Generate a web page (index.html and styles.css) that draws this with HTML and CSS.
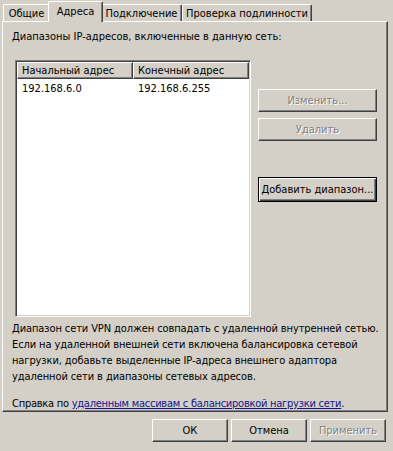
FILE: index.html
```html
<!DOCTYPE html>
<html lang="ru">
<head>
<meta charset="utf-8">
<link rel="stylesheet" href="styles.css">
</head>
<body>
<div class="dialog">
  <div class="tabs">
    <div class="tab t1">Общие</div>
    <div class="tab sel t2">Адреса</div>
    <div class="tab t3">Подключение</div>
    <div class="tab t4">Проверка подлинности</div>
  </div>
  <div class="panel">
    <div class="label">Диапазоны IP-адресов, включенные в данную сеть:</div>
    <div class="main">
      <div class="list">
        <div class="head">
          <div class="hcell c1">Начальный адрес</div>
          <div class="hcell c2">Конечный адрес</div>
        </div>
        <div class="row">
          <div class="cell c1">192.168.6.0</div>
          <div class="cell c2">192.168.6.255</div>
        </div>
      </div>
      <div class="side">
        <div class="btn disabled">Изменить...</div>
        <div class="btn disabled">Удалить</div>
        <div class="btn default add">Добавить диапазон...</div>
      </div>
    </div>
    <div class="desc">Диапазон сети VPN должен совпадать с удаленной внутренней сетью.<br>Если на удаленной внешней сети включена балансировка сетевой<br>нагрузки, добавьте выделенные IP-адреса внешнего адаптора<br>удаленной сети в диапазоны сетевых адресов.</div>
    <div class="help">Справка по <a href="#">удаленным массивам с балансировкой нагрузки сети</a>.</div>
  </div>
  <div class="footer">
    <div class="btn fbtn">ОК</div>
    <div class="btn fbtn">Отмена</div>
    <div class="btn fbtn disabled">Применить</div>
  </div>
</div>
</body>
</html>
```
FILE: styles.css
```css
html, body {
  margin: 0;
  padding: 0;
  background: #d4d0c8;
}
body {
  width: 393px;
  height: 451px;
  overflow: hidden;
  font-family: "DejaVu Sans Condensed", "DejaVu Sans", sans-serif;
  font-size: 11px;
  color: #000;
}
.dialog {
  display: flex;
  flex-direction: column;
}
.tabs {
  display: flex;
  align-items: flex-end;
  height: 21px;
  padding-left: 3px;
  position: relative;
  z-index: 2;
}
.tab {
  height: 17px;
  box-sizing: border-box;
  border-top: 1px solid #fff;
  border-left: 1px solid #fff;
  border-right: 1px solid #404040;
  box-shadow: inset -1px 0 0 #808080;
  border-top-left-radius: 2px;
  border-top-right-radius: 2px;
  padding: 2px 0 0 0;
  text-align: center;
  line-height: 13px;
}
.t1 { width: 47px; }
.t2 { width: 51px; }
.t3 { width: 81px; }
.t4 { width: 130px; }
.tab.sel {
  height: 21px;
  margin: 0 -2px -1px -2px;
  width: 55px;
  background: #d4d0c8;
  padding-top: 3px;
  position: relative;
}
.panel {
  margin: 0 5px 0 2px;
  height: 391px;
  box-sizing: border-box;
  border-top: 1px solid #fff;
  border-left: 1px solid #fff;
  border-right: 1px solid #404040;
  border-bottom: 1px solid #404040;
  box-shadow: inset -1px -1px 0 #808080;
  padding: 8px 0 0 9px;
  display: flex;
  flex-direction: column;
}
.label {
  line-height: 13px;
}
.main {
  display: flex;
  margin-top: 17px;
  margin-left: 3px;
}
.list {
  width: 236px;
  height: 257px;
  box-sizing: border-box;
  background: #fff;
  border-top: 1px solid #808080;
  border-left: 1px solid #808080;
  border-right: 1px solid #fff;
  border-bottom: 1px solid #fff;
  box-shadow: inset 1px 1px 0 #404040, inset -1px -1px 0 #d4d0c8;
  padding: 1px;
}
.head {
  display: flex;
  height: 17px;
}
.hcell {
  box-sizing: border-box;
  background: #d4d0c8;
  border-top: 1px solid #fff;
  border-left: 1px solid #fff;
  border-right: 1px solid #404040;
  border-bottom: 1px solid #404040;
  box-shadow: inset -1px -1px 0 #808080;
  padding: 1px 0 0 4px;
  line-height: 13px;
}
.hcell.c1 { width: 117px; }
.hcell.c2 { width: 117px; }
.row {
  display: flex;
  margin-top: 3px;
  line-height: 13px;
}
.cell { padding-left: 5px; box-sizing: border-box; }
.cell.c1 { width: 117px; }
.cell.c2 { width: 117px; }
.side {
  display: flex;
  flex-direction: column;
  margin-left: 7px;
  margin-top: 29px;
  gap: 6px;
}
.btn {
  box-sizing: border-box;
  background: #d4d0c8;
  border-top: 1px solid #fff;
  border-left: 1px solid #fff;
  border-right: 1px solid #404040;
  border-bottom: 1px solid #404040;
  box-shadow: inset -1px -1px 0 #808080;
  text-align: center;
  line-height: 13px;
  padding-top: 4px;
}
.side .btn {
  width: 119px;
  height: 23px;
}
.btn.add {
  margin-top: 30px;
  height: 25px;
  padding-top: 5px;
}
.btn.default {
  border: 1px solid #000;
  box-shadow: inset 1px 1px 0 #fff, inset -1px -1px 0 #404040, inset -2px -2px 0 #808080;
}
.btn.disabled {
  color: #808080;
  text-shadow: 1px 1px 0 #fff;
}
.desc {
  margin-top: 4px;
  white-space: nowrap;
  letter-spacing: -0.1px;
  line-height: 16px;
}
.help {
  margin-top: 11px;
  line-height: 16px;
  white-space: nowrap;
  letter-spacing: -0.25px;
}
.help a {
  color: #14148c;
  text-decoration: underline;
}
.footer {
  display: flex;
  justify-content: flex-end;
  gap: 3px;
  margin-top: 7px;
  padding-right: 7px;
}
.fbtn {
  width: 76px;
  height: 23px;
}
```
